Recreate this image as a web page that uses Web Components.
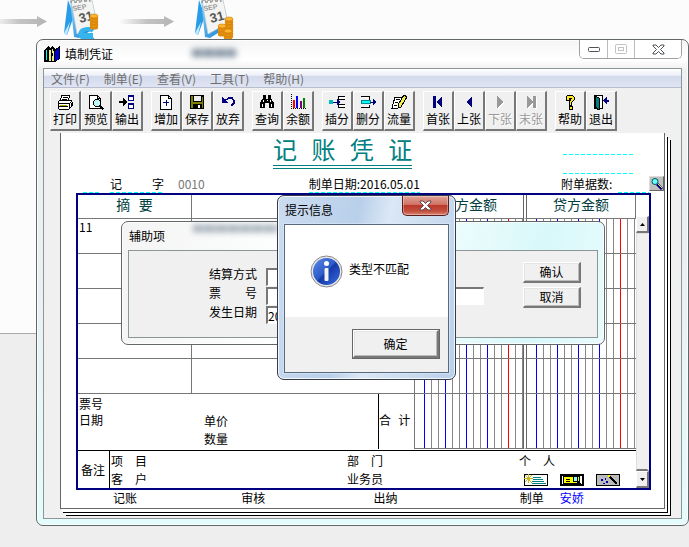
<!DOCTYPE html>
<html lang="zh-CN">
<head>
<meta charset="utf-8">
<title>填制凭证</title>
<style>
html,body{margin:0;height:100%}
body{font:12px/18px "Noto Sans CJK SC",sans-serif;color:#000;background:#eee}
</style>
</head>
<body>
<desk-top>
  <glass-window class="main" slot="window" heading="填制凭证" main>
    <app-icon slot="icon"></app-icon>
    <window-controls slot="controls"></window-controls>
    <menu-bar></menu-bar>
    <tool-bar></tool-bar>
    <voucher-page></voucher-page>
  </glass-window>
  <glass-window class="aux" slot="aux" heading="辅助项" aux>
    <aux-form></aux-form>
  </glass-window>
  <glass-window class="prompt" slot="prompt" heading="提示信息" prompt>
    <close-button slot="controls"></close-button>
    <message-box>类型不匹配</message-box>
  </glass-window>
</desk-top>
<script>
const define = (name, html, setup) => customElements.define(name, class extends HTMLElement {
  connectedCallback() {
    if (this.shadowRoot) return;
    const root = this.attachShadow({ mode: 'open' });
    const t = document.createElement('template');
    t.innerHTML = typeof html === 'function' ? html(this) : html;
    root.append(t.content.cloneNode(true));
    if (setup) setup(root, this);
  }
});

const calendar = coins => `
<svg width="46" height="40" viewBox="0 0 46 40" aria-hidden="true">
  <defs><linearGradient id="b" x1="0" y1="0" x2="1" y2="1"><stop offset="0" stop-color="#8fd8fb"/><stop offset="1" stop-color="#0b78d0"/></linearGradient></defs>
  <path d="M6 0 2 33 5 35 12 16z" fill="#2a9be6"/><path d="M2 33 5 35 8 22z" fill="#bfe9ff"/>
  <path d="M8 0H30L36 26 17 38 12 37z" fill="url(#b)"/>
  <path d="M9 0H30L35 23 15 34z" fill="#f4f4f2" stroke="#c9ccce" stroke-width=".6"/>
  <path d="M9 3c0-4 4-4 4 0M14 3c0-4 4-4 4 0M19 2c0-4 4-4 4 0M24 2c0-4 4-4 4 0" fill="none" stroke="#777" stroke-width="1"/>
  <g font-family="Liberation Sans" font-weight="bold" fill="#999"><text transform="translate(11 11) rotate(-10)" font-size="7">SEP</text><text transform="translate(18 23) rotate(-14)" font-size="13" fill="#555">31</text></g>
  ${coins}
</svg>`;
const coin = (x, y, n) => Array.from({length:n},(_, i)=>`<path d="M${x} ${y+(n-i)*3}v3c0 2 8 2 8 0v-3z" fill="#e08a0a"/><ellipse cx="${x+4}" cy="${y+(n-i)*3}" rx="4" ry="2" fill="#ffb52e" stroke="#c77a08" stroke-width=".6"/>`).join('');

define('desk-top', `
<style>
:host{display:block;position:relative;min-height:100vh;box-sizing:border-box;padding:39px 0 21px 36px;background:linear-gradient(#fcfcfc 333px,#aaa 333px 334px,#eee 334px);overflow:hidden}
.deco{position:absolute;top:0;left:0}
.cal1{left:62px}.cal2{left:193px}
.a1{top:16px;left:-8px}.a2{top:16px;left:119px}
::slotted(.main){position:relative}
::slotted(.aux){position:absolute;left:121px;top:221px;width:484px}
::slotted(.prompt){position:absolute;left:277px;top:195px;width:179px}
</style>
<svg class="deco a1" width="56" height="11"><defs><linearGradient id="g"><stop stop-color="#fcfcfc"/><stop offset=".5" stop-color="#c4c4c4"/><stop offset="1" stop-color="#b4b4b4"/></linearGradient></defs><path d="M0 3H45V0L55 5.500 45 11V8H0z" fill="url(#g)"/></svg>
<svg class="deco a2" width="56" height="11"><path d="M0 3H45V0L55 5.500 45 11V8H0z" fill="url(#g)"/></svg>
<div class="deco cal1">${calendar('<path d="M31 31a7 5 0 1 0 0 6M19 35h12" fill="none" stroke="#35b4ee" stroke-width="4"/>' + coin(28,13,4))}</div>
<div class="deco cal2">${calendar(coin(32,16,6) + coin(25,23,3) + coin(31,28,3))}</div>
<slot name="window"></slot><slot name="aux"></slot><slot name="prompt"></slot>`);

define('glass-window', el => `
<style>
:host{display:block;box-sizing:border-box;border:1px solid #62686a;border-radius:7px;padding:0 6px 6px;box-shadow:inset 0 0 0 1px #ffffffcc}
:host([main]){background:linear-gradient(#f5f5f5,#fff 20px,#efefef 30px,#ebeff0 220px,#e4fcfd 100%)}
:host([aux]){background:linear-gradient(100deg,#f4f4f4,#fdfefe 35%,#f4fdfd 60%,#d8f8fa 85%,#e8fbfd)}
:host([prompt]){border-color:#333c48;background:linear-gradient(100deg,#cbdcf0,#b9d0ea 40%,#dbe8f5 55%,#b9d0ea)}
header{display:flex;align-items:flex-start;height:28px}
h1{margin:5px 0 0 1px;font-size:12px;font-weight:400;line-height:18px;flex:1;white-space:nowrap}
:host([main]) h1{margin-left:4px}
.body{border:1px solid #8d9696;background:#f0f0f0}
:host([prompt]) .body{border-color:#596a7c;box-shadow:0 0 0 1px #dceafa99}
.smudge{position:absolute;filter:blur(3px);background:repeating-linear-gradient(90deg,#52657a 0 9px,#8296a8 9px 12px);opacity:.75}
:host([main]) .smudge{left:155px;top:9px;width:44px;height:8px}
:host([aux]) .smudge{left:71px;top:3px;width:86px;height:7px;opacity:.55}
:host([prompt]) .smudge{display:none}
</style>
<header><slot name="icon"></slot><h1>${el.getAttribute('heading')}</h1><slot name="controls"></slot></header>
<i class="smudge"></i>
<div class="body"><slot></slot></div>`);

define('app-icon', `<style>:host{display:block;margin:6px 0 0 1px;height:17px}</style>
<svg width="17" height="17" viewBox="0 0 17 17" shape-rendering="crispEdges" aria-hidden="true"><path d="M0 4 4 0 6 2V16H0z" fill="#000"/><path d="M2 4 3 3V14H2z" fill="#0ff"/><path d="M5 3 8 0 11 3V16H5z" fill="#000"/><path d="M5 4h2v11H5zM8 3h1v2h1v10H8z" fill="#f1ee85"/><path d="M7 7h2v3H7z"/><path d="M10 4 16 0V13L11 16z" fill="#000"/><path d="M11 5 15 2V13L11 15z" fill="#0000d8"/></svg>`);

define('window-controls', `<style>
:host{display:flex;border:1px solid #9da1a2;border-top:0;border-radius:0 0 5px 5px;overflow:hidden;height:18px}
button{border:0;border-right:1px solid #b9bcbc;background:#fff;padding:0;width:28px;display:grid;place-items:center}
button+button{width:27px}
button:last-child{border:0;width:46px}</style>
<button aria-label="最小化"><svg width="12" height="5"><rect x=".5" y=".5" width="11" height="4" rx="1" fill="#fff" stroke="#4b5358"/></svg></button>
<button aria-label="最大化" disabled><svg width="12" height="10" fill="none" stroke="#bfc3c4"><rect x=".5" y=".5" width="11" height="9" rx="1"/><rect x="3.500" y="3.500" width="5" height="3"/></svg></button>
<button aria-label="关闭"><svg width="13" height="11"><path d="M1 1H4L6.500 3.500 9 1H12V2L8.500 5.500 12 9V10H9L6.500 7.500 4 10H1V9L4.500 5.500 1 2z" fill="#fff" stroke="#4b5358"/></svg></button>`);

define('close-button', `<style>:host{display:block}
button{display:grid;place-items:center;box-sizing:border-box;width:47px;height:20px;border:1px solid #5b1d1b;border-top:0;border-radius:0 0 5px 5px;padding:0;background:linear-gradient(#e0a598,#cf7264 45%,#b8392a 50%,#c4503d 80%,#d98575);box-shadow:inset 0 0 0 1px #ffffff55}</style>
<button aria-label="关闭"><svg width="13" height="11"><path d="M1 1H4L6.500 3.500 9 1H12V2L8.500 5.500 12 9V10H9L6.500 7.500 4 10H1V9L4.500 5.500 1 2z" fill="#fff" stroke="#5d4a50"/></svg></button>`);

define('menu-bar', `<style>
:host{display:flex;gap:14px;padding-left:7px;height:18px;border-bottom:1px solid #b9bdd0;background:linear-gradient(#fff,#edf0f8 35%,#d3daec 40%,#e0e5f3);color:#6e6e6e}
button{border:0;background:none;padding:0;font:inherit;line-height:19px;color:inherit;white-space:nowrap}</style>
<button>文件(F)</button><button>制单(E)</button><button>查看(V)</button><button>工具(T)</button><button>帮助(H)</button>`);

const icons = {
 print:'<path d="M5 1h8l-2 6H3z" fill="#fff" stroke="#000"/><path d="M6 3.500h5M5 5.500h5" stroke="#000"/><path d="M1 8l2-2h11l1 2v4l-3 3H2l-1-2z" fill="#fff" stroke="#000"/><path d="M1 9.500h11l3-2M2 12.500h9M12 9v5M14 9v3" stroke="#000" fill="none"/><path d="M3 11h7" stroke="#a8a800"/>',
 preview:'<path d="M1.500 1.500h8l3 3v10h-11zM9.500 1.500v3h3" fill="#fff" stroke="#000"/><circle cx="9" cy="9" r="3.500" fill="#b9f5f5" stroke="#000"/><path d="M11.500 11.500l4 4" stroke="#000" stroke-width="2"/>',
 export:'<path d="M0 8h5" stroke="#000" stroke-width="2"/><path d="M4 4v8l4-4z"/><path d="M9.500 1.500h5v5h-5zM9.500 9.500h5v5h-5z" fill="#fff" stroke="#000080"/><path d="M9 2h6M9 10h6" stroke="#000080" stroke-width="2"/>',
 add:'<path d="M2.500 1.500h8l3 3v11h-11zM10.500 1.500v3h3" fill="#fff" stroke="#000"/><path d="M5 8.500h6M8 5.500v6" stroke="#000080"/>',
 save:'<path d="M1 1h14v14H1z"/><path d="M2 2h2v12H2zM13 3h1v11h-1zM4 8h9v2H4z" fill="#808000"/><path d="M5 2h7v5H5z" fill="#eee"/><path d="M9 11h2v3H9z" fill="#fff"/>',
 undo:'<path d="M2 3v6h6z" fill="#000080"/><path d="M4 7l5-3h3l2 3v2l-3 3" fill="none" stroke="#000080" stroke-width="1.500"/>',
 find:'<path d="M4 1h3v4h2V1h3v3l3 5v5h-5V9H6v5H1V9l3-5z"/><path d="M4 6v2M11 6v2M3 10v3M12 10v3M8 6v1" stroke="#fff"/>',
 chart:'<path d="M1.500 0v14.500H16" stroke="#000" stroke-dasharray="1 1" fill="none"/><path d="M3 6h2v8H3z" fill="#f00"/><path d="M6 2h2v12H6z" fill="#00f"/><path d="M10 7h2v7h-2z" fill="#800080"/><path d="M13 4h2v10h-2z" fill="#008000"/>',
 insert:'<path d="M16 2.500H9v3h7M16 10.500H9v3h7" fill="#fff" stroke="#000"/><path d="M0 6h4v4H0z" fill="#0bb"/><path d="M4 8h7" stroke="#000080"/><path d="M8 5v6l3-3z" fill="#000080"/>',
 remove:'<path d="M1 2.500h8v3M1 13.500h8v-3" fill="#fff" stroke="#000"/><path d="M1.500 6.500h9v3h-9z" fill="#0ff" stroke="#088"/><path d="M10 8h4" stroke="#000080"/><path d="M13 5v6l3-3z" fill="#000080"/>',
 flow:'<path d="M4 3h7L7 14H1l1-4z" fill="#fff" stroke="#000"/><path d="M5 5.500h4M4 8.500h3M3 11.500h3" stroke="#000"/><path d="M13 1l3 2-6 10-3 1v-3z" fill="#f2ef40" stroke="#000"/>',
 first:'<path d="M3 2h3v12H3zM12 2v12L6 8z" fill="#000080"/>',
 prev:'<path d="M11 2v12L5 8z" fill="#000080"/>',
 next:'<path d="M6 3v12l6-6z" fill="#fff"/><path d="M5 2v12l6-6z" fill="#999"/>',
 last:'<path d="M5 3v12l6-6zM11 3h3v12h-3z" fill="#fff"/><path d="M4 2v12l6-6zM10 2h3v12h-3z" fill="#999"/>',
 help:'<path d="M4 6V3l2-2h4l2 2v3L9 9v2H7V8l2-3V4H7v2zM7 12h3v3H7z" fill="#ffeb20" stroke="#000"/>',
 exit:'<path d="M1.500 1.500h8v13h-8z" fill="#fff" stroke="#000"/><path d="M2 2l4 2v12l-4-3z" fill="#008080" stroke="#000"/><path d="M11 6.500h5" stroke="#000080" stroke-width="2"/><path d="M9.500 6.500l4-4v8z" fill="#000080"/>'
};
define('tool-button', el => `<style>
:host{display:block}
button{display:flex;flex-direction:column;align-items:center;box-sizing:border-box;width:31px;height:40px;padding:2px 0 0;border:solid;border-width:1px 2px 2px 1px;border-color:#fff #777 #777 #fff;background:#f0f0f0;font:inherit;line-height:18px;color:#000;white-space:nowrap}
button:disabled{color:#999;text-shadow:1px 1px #fff}
svg{flex:none}
</style><button ${el.hasAttribute('off')?'disabled':''}><svg width="16" height="16" viewBox="0 0 16 16" shape-rendering="crispEdges" aria-hidden="true">${icons[el.getAttribute('icon')]}</svg><slot></slot></button>`);

const groups=[[['print','打印'],['preview','预览'],['export','输出']],[['add','增加'],['save','保存'],['undo','放弃']],[['find','查询'],['chart','余额']],[['insert','插分'],['remove','删分'],['flow','流量']],[['first','首张'],['prev','上张'],['next','下张',1],['last','末张',1]],[['help','帮助'],['exit','退出']]];
define('tool-bar', `<style>:host{display:flex;gap:8px;padding:3px 6px 2px}div{display:flex}</style>`+
 groups.map(g=>`<div role="group">${g.map(b=>`<tool-button icon="${b[0]}" ${b[2]?'off':''}>${b[1]}</tool-button>`).join('')}</div>`).join(''));

define('scroll-bar', `<style>
:host{display:flex;flex-direction:column;width:13px;padding-top:21px;background:#fff}
button{box-sizing:border-box;height:17px;flex:none;padding:0;display:grid;place-items:center}
button,i{border:solid;border-width:1px 2px 2px 1px;border-color:#fff #777 #777 #fff;background:#f0f0f0}
i{flex:1;border-color:#ddd #f0f0f0 #777 #ddd}</style>
<button aria-label="向上"><svg width="5" height="3"><path d="M0 3 2.500 0 5 3z"/></svg></button><i></i><button aria-label="向下"><svg width="5" height="3"><path d="M0 0 2.500 3 5 0z"/></svg></button>`);

define('voucher-page', `<style>
:host{display:block;box-sizing:border-box;margin:0 16px 9px;border:1px solid #666;border-top:0;background:#fff;box-shadow:2px 3px #fff,3px 4px #000,5px 6px #fff,6px 7px #000}
.top{display:flex;justify-content:space-between;padding:8px 31px 0 212px;height:34px}
h2{margin:0;height:24px;font:24px/24px "Liberation Mono","Noto Sans CJK SC",monospace;color:#008080;border-bottom:4px double #008080;white-space:nowrap}
.dash{background:repeating-linear-gradient(90deg,#0ff 0 4px,transparent 4px 6px) bottom/100% 1px no-repeat}
.blanks{width:70px}.blanks div{height:14px}.blanks div+div{height:19px}
.meta{display:flex;height:18px;padding-left:22px;white-space:nowrap}
.word{display:flex;justify-content:space-between;width:54px;margin:0 14px 0 11px}
.no{color:#777}
.date{margin-left:104px;margin-right:auto}
.count{width:57px}
.blank{width:16px}
.num{width:31px}
.look{width:15px;height:15px;margin-top:1px;padding:0;border:1px solid;border-color:#ddd #666 #666 #ddd;background:#c0c0c0}
.look svg{display:block}
.frame{display:flex;margin:0 13px 0 15px;border:2px solid #000080}
.sheet{flex:1;min-width:0}
table{width:100%;table-layout:fixed;border-spacing:0}
th,td{box-sizing:border-box;padding:0;border-bottom:1px solid #777;text-align:left;vertical-align:top;font-weight:400}
th{height:24px;font:14px/23px "Liberation Mono","Noto Sans CJK SC",monospace;color:#004040;text-align:center}
tbody td{height:35px;line-height:16px;padding-left:1px}
th+th,tbody td+td,.d{border-left:1px solid #777}
th.c,.d.c,tbody .d.c{border-left:4px double #666}
th.c{border-right:1px solid #777}
.d{background:linear-gradient(#fff 0 0) 0 0/3px 100% no-repeat,linear-gradient(#f00 0 0) 93px 0/1px 100% no-repeat,linear-gradient(90deg,#00f 1px,transparent 1px) 9px 0/21px 100%,linear-gradient(90deg,#888 1px,transparent 1px) 9px 0/7px 100%;background-clip:padding-box}
tfoot td{height:55px}
tfoot .sum{border-bottom:0}
.sumbox{display:grid;grid-template-columns:126px 1fr 36px;height:55px;line-height:17px}
.sumbox div{padding:2px 0 0 1px;line-height:16px}.sumbox .unit{padding:18px 0 0;line-height:18px}
.sumbox .total{border-left:1px solid #000;padding:20px 0 0;font-family:"Liberation Mono","Noto Sans CJK SC",monospace}
.notes{display:flex;margin-top:1px;border-top:1px solid #000;height:37px}
.notes b{font-weight:400;width:32px;box-sizing:border-box;border-right:1px solid #000;padding-left:3px;line-height:37px}
.notes>div{flex:1;display:grid;grid-template-columns:236fr 172fr 117fr;grid-auto-rows:18px;padding:1px 0 0 1px}
.pics{display:flex;gap:12px;padding:4px 0 0 5px}
.pics button{border:0;padding:0;width:24px;height:12px;background:none}.pics svg{display:block}
.signs{display:grid;grid-template-columns:128fr 132fr 146fr 40fr 104fr;padding-left:52px;height:18px;line-height:15px}
.signs a{color:#00f;text-decoration:none}
</style>
<div class="top"><h2>记 账 凭 证</h2><div class="blanks"><div class="dash"></div><div class="dash"></div></div></div>
<div class="meta"><span class="blank dash"></span><span class="word dash"><span>记</span><span>字</span></span><span class="no">0010</span>
<span class="date dash">制单日期:2016.05.01</span><span class="count">附单据数:</span><span class="num dash"></span>
<button class="look" aria-label="查找"><svg width="13" height="13"><path d="M7 7l5 5" stroke="#000080" stroke-width="3"/><path d="M7 6l5 5" stroke="#e8e040"/><circle cx="5" cy="4.500" r="3" fill="#6ff" stroke="#055"/></svg></button></div>
<div class="frame"><div class="sheet">
<table><colgroup><col style="width:113px"><col><col style="width:109px"><col style="width:113px"></colgroup>
<thead><tr><th>摘 要</th><th></th><th>借方金额</th><th class="c">贷方金额</th></tr></thead>
<tbody></tbody>
<tfoot><tr><td colspan="2" class="sum"><div class="sumbox"><div>票号<br>日期</div><div class="unit">单价<br>数量</div><div class="total">合 计</div></div></td><td class="d"></td><td class="d c"></td></tr></tfoot></table>
<div class="notes"><b>备注</b><div><span>项　目</span><span>部　门</span><span>个　人</span><span>客　户</span><span>业务员</span>
<span class="pics"><button aria-label="新增"><svg width="24" height="12" shape-rendering="crispEdges"><path d="M.5.500h23v11H.5z" fill="#fff" stroke="#000"/><path d="M9 3.500h8M9 5.500h10M8 7.500h12M8 9.500h14" stroke="#008080"/><path d="M1 1l7 8M8 1L1 8M4 0v9M0 4h9" stroke="#c8bc20"/></svg></button>
<button aria-label="查看"><svg width="24" height="12" shape-rendering="crispEdges"><path d="M1 1h22v10H1z" fill="#fff" stroke="#000" stroke-width="2"/><path d="M3 2h17v8H3z" fill="#000"/><path d="M4 3h15v6H4z" fill="#ff0"/><path d="M6 5.500h4M6 7.500h4" stroke="#000"/><path d="M13 2h4v5h-4z" fill="#8ff" stroke="#000"/><path d="M17 7l4 4" stroke="#000" stroke-width="2"/></svg></button>
<button aria-label="自动"><svg width="24" height="12" shape-rendering="crispEdges"><path d="M.5.500h23v11H.5z" fill="#bbb" stroke="#000"/><path d="M13 2l8 8" stroke="#000" stroke-width="2"/><path d="M5 5h2v2H5zM9 4h1v2H9zM10 7h2v2h-2zM7 9h2v1H7z" fill="#0000a0"/><path d="M12 1h2v2h-2z" fill="#ff0"/></svg></button></span></div></div>
</div><scroll-bar></scroll-bar></div>
<div class="signs"><span>记账</span><span>审核</span><span>出纳</span><span>制单</span><a href="#user">安娇</a></div>`,
 root => { root.querySelector('tbody').innerHTML = ['11','','','',''].map(t=>`<tr><td>${t}</td><td></td><td class="d"></td><td class="d c"></td></tr>`).join(''); });

define('raised-button', `<style>:host{display:block;height:21px}button{width:100%;height:100%;box-sizing:border-box;border:solid;border-width:1px 2px 2px 1px;border-color:#fff #777 #777 #fff;box-shadow:inset 1px 1px #e4e4e4,inset -1px -1px #bbb;background:#f0f0f0;padding:0;font:inherit;line-height:16px;color:#000}</style><button><slot></slot></button>`);

define('aux-form', `<style>
:host{display:flex;justify-content:space-between;box-sizing:border-box;height:86px;padding:11px 16px 0 80px}
form{display:grid;grid-template-columns:57px 218px;grid-auto-rows:18px;gap:1px 0;padding-top:6px;align-content:start}
label{line-height:12px;white-space:nowrap}
input{box-sizing:border-box;height:18px;width:100%;min-width:0;margin:0;border:1px solid;border-width:2px 1px 1px 2px;border-color:#777 #fff #fff #777;background:#fff;padding:0;font:inherit;line-height:14px;color:#000}
.short{width:140px}
.acts{display:grid;gap:4px;align-content:start;width:58px}
</style>
<form><label for="m">结算方式</label><input id="m" class="short"><label for="n">票　　号</label><input id="n"><label for="d">发生日期</label><input id="d" class="short" value="2016.05.01"></form>
<div class="acts"><raised-button>确认</raised-button><raised-button>取消</raised-button></div>`);

define('message-box', `<style>
:host{display:block;background:#fff}
.msg{display:flex;align-items:center;gap:6px;height:92px;padding-left:25px}
p{margin:0 0 4px}
.foot{background:#f0f0f0;padding:12px 8px 13px;display:flex;justify-content:flex-end}
raised-button{width:88px;height:30px;border:1px solid #666;box-sizing:border-box}
</style>
<div class="msg"><svg width="33" height="33" viewBox="0 0 33 33" aria-hidden="true"><defs><linearGradient id="c" x1="0" y1="0" x2="1" y2="1"><stop stop-color="#5b8be8"/><stop offset=".48" stop-color="#2c59c8"/><stop offset=".52" stop-color="#1539a8"/><stop offset="1" stop-color="#3a6ee0"/></linearGradient></defs><circle cx="16.500" cy="16.500" r="15.500" fill="#e8e8e8" stroke="#888"/><circle cx="16.500" cy="16.500" r="13.500" fill="url(#c)"/><circle cx="16.500" cy="8.500" r="2.500" fill="#fff"/><rect x="14.500" y="13" width="4" height="13" rx="1" fill="#f2f2f2"/></svg><p><slot></slot></p></div>
<div class="foot"><raised-button>确定</raised-button></div>`);
</script>
</body>
</html>
